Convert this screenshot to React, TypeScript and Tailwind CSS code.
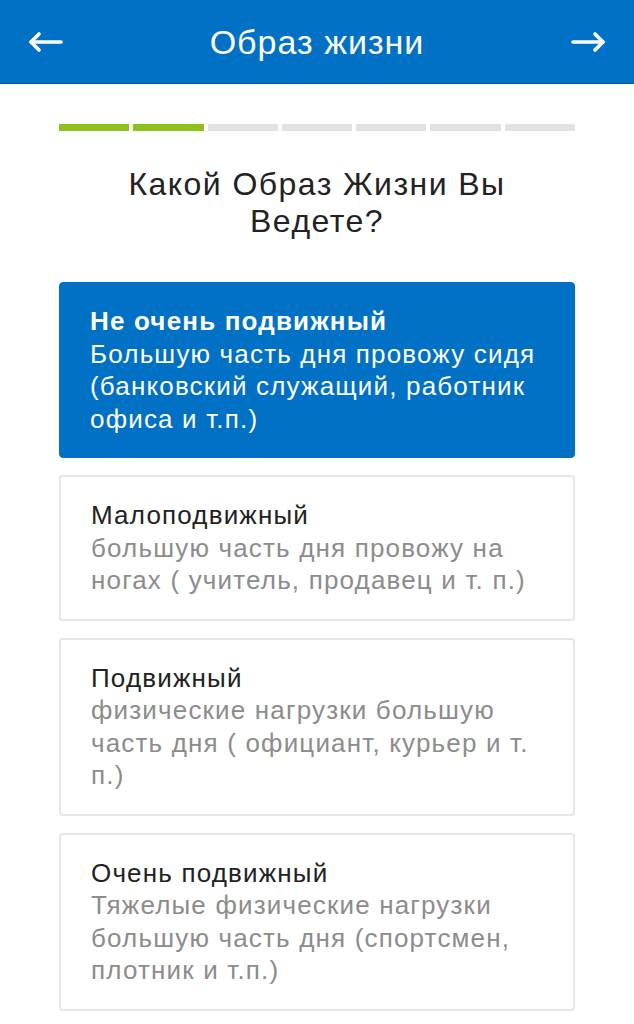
import { useState } from "react";

// Lifestyle step of the onboarding questionnaire

interface LifestyleOption {
  id: string;
  title: string;
  lines: string[]; // description, broken the way the screen shows it
}

const OPTIONS: LifestyleOption[] = [
  {
    id: "low",
    title: "Не очень подвижный",
    lines: ["Большую часть дня провожу сидя", "(банковский служащий, работник", "офиса и т.п.)"],
  },
  {
    id: "light",
    title: "Малоподвижный",
    lines: ["большую часть дня провожу на", "ногах ( учитель, продавец и т. п.)"],
  },
  {
    id: "active",
    title: "Подвижный",
    lines: ["физические нагрузки большую", "часть дня ( официант, курьер и т.", "п.)"],
  },
  {
    id: "very",
    title: "Очень подвижный",
    lines: ["Тяжелые физические нагрузки", "большую часть дня (спортсмен,", "плотник и т.п.)"],
  },
];

const TOTAL_STEPS = 7;
const CURRENT_STEP = 2;

const Arrow = ({ dir }: { dir: "left" | "right" }) => (
  <svg
    width="36"
    height="24"
    viewBox="0 0 36 24"
    fill="none"
    stroke="white"
    strokeWidth="3.6"
    strokeLinecap="round"
    strokeLinejoin="round"
    className={dir === "right" ? "rotate-180" : ""}
  >
    <path d="M3 12h30" />
    <path d="M11 4l-8 8 8 8" />
  </svg>
);

export default function App() {
  const [selected, setSelected] = useState("low");

  return (
    <div className="min-h-screen bg-white font-['Liberation_Sans',Arial,sans-serif]">
      <header className="h-[84px] bg-[#0071c4] border-b border-[#0a5c9c] flex items-center justify-between px-[28px]">
        <button className="w-[40px] flex justify-start">
          <Arrow dir="left" />
        </button>
        <h1 className="text-white text-[34px] tracking-[0.03em] leading-none">Образ жизни</h1>
        <button className="w-[40px] flex justify-end">
          <Arrow dir="right" />
        </button>
      </header>

      <div className="px-[59px]">
        <div className="flex gap-[4px] pt-[40px]">
          {Array.from({ length: TOTAL_STEPS }).map((_, i) => (
            <div
              key={i}
              className={
                i < CURRENT_STEP
                  ? "flex-1 h-[7px] bg-[#8cc21a]"
                  : "flex-1 h-[7px] bg-[#e2e2e2]"
              }
            />
          ))}
        </div>

        <h2 className="text-center text-[32px] tracking-[0.045em] leading-[37px] text-[#222] pt-[35px] pb-[42px]">
          Какой Образ Жизни Вы
          <br />
          Ведете?
        </h2>

        <div className="flex flex-col gap-[17px]">
          {OPTIONS.map((opt) => {
            const active = opt.id === selected;
            return (
              <button
                key={opt.id}
                onClick={() => setSelected(opt.id)}
                className={
                  active
                    ? "text-left rounded-[4px] bg-[#0071c4] border border-[#0071c4] px-[30px] py-[22px] text-[26px] tracking-[0.045em] leading-[32.5px] whitespace-nowrap"
                    : "text-left rounded-[4px] bg-white border-2 border-[#e6e6e6] px-[30px] py-[22px] text-[26px] tracking-[0.045em] leading-[32.5px] whitespace-nowrap"
                }
              >
                <div className={active ? "text-white font-bold" : "text-[#222]"}>{opt.title}</div>
                <div className={active ? "text-white" : "text-[#8c8c8c]"}>
                  {opt.lines.map((line, i) => (
                    <div key={i}>{line}</div>
                  ))}
                </div>
              </button>
            );
          })}
        </div>
      </div>
    </div>
  );
}
